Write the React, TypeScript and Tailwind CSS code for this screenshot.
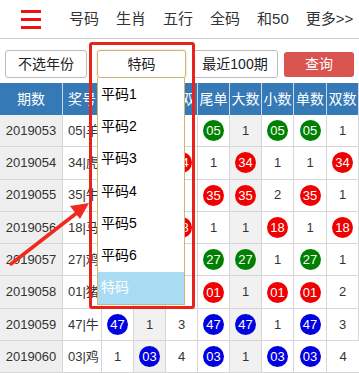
import React from "react";

type Cell = string | { b: string; c: "g" | "r" | "b" };

const rows: { id: string; zh: string; cells: Cell[] }[] = [
  { id: "2019053", zh: "05|羊", cells: ["", "", "1", { b: "05", c: "g" }, "1", { b: "05", c: "g" }, { b: "05", c: "g" }, "1"] },
  { id: "2019054", zh: "34|虎", cells: ["", "", { b: "34", c: "r" }, "1", { b: "34", c: "r" }, "1", "1", { b: "34", c: "r" }] },
  { id: "2019055", zh: "35|牛", cells: ["", "", "1", { b: "35", c: "r" }, { b: "35", c: "r" }, "2", { b: "35", c: "r" }, "1"] },
  { id: "2019056", zh: "18|马", cells: ["", "", { b: "18", c: "r" }, "1", "1", { b: "18", c: "r" }, "1", { b: "18", c: "r" }] },
  { id: "2019057", zh: "27|鸡", cells: ["", "", "2", { b: "27", c: "g" }, { b: "27", c: "g" }, "1", { b: "27", c: "g" }, "1"] },
  { id: "2019058", zh: "01|猪", cells: ["", "", "3", { b: "01", c: "r" }, "1", { b: "01", c: "r" }, { b: "01", c: "r" }, "2"] },
  { id: "2019059", zh: "47|牛", cells: [{ b: "47", c: "b" }, "1", "3", { b: "47", c: "b" }, { b: "47", c: "b" }, "1", { b: "47", c: "b" }, "3"] },
  { id: "2019060", zh: "03|鸡", cells: ["1", { b: "03", c: "b" }, "4", { b: "03", c: "b" }, "1", { b: "03", c: "b" }, { b: "03", c: "b" }, "4"] },
];

const heads = ["期数", "奖号", "", "", "单双", "尾单", "大数", "小数", "单数", "双数"];
const grayCols = [0, 3, 6];

const ballBg: Record<string, string> = {
  g: "bg-[#008000]",
  r: "bg-[#f00000]",
  b: "bg-[#0000e0]",
};

function Ball({ n, c }: { n: string; c: string }) {
  return (
    <span
      className={
        "flex items-center justify-center w-[21px] h-[21px] rounded-full text-white text-[13px] leading-none " +
        ballBg[c]
      }
    >
      {n}
    </span>
  );
}

export default function App() {
  const font = "font-['Liberation_Sans','Noto_Sans_CJK_SC',sans-serif]";
  return (
    <div className={"relative w-[359px] h-[373px] overflow-hidden bg-white text-[#333] " + font}>
      {/* header */}
      <div className="flex items-center h-[39px] border-b border-[#cfcfcf]">
        <div className="ml-[21px] flex flex-col gap-[5px] w-[20px]">
          <span className="h-[3px] bg-[#ee1111]" />
          <span className="h-[3px] bg-[#ee1111]" />
          <span className="h-[3px] bg-[#ee1111]" />
        </div>
        <nav className="ml-[28px] flex gap-[17px] text-[15px] text-[#333] pt-[1px]">
          <span>号码</span>
          <span>生肖</span>
          <span>五行</span>
          <span>全码</span>
          <span>和50</span>
          <span>更多&gt;&gt;</span>
        </nav>
      </div>

      {/* filters */}
      <div className="flex items-center mt-[11px] h-[28px] text-[14px]">
        <div className="ml-[5px] w-[82px] h-[28px] border border-[#bdbdbd] rounded-[3px] flex items-center justify-center text-[#222]">
          不选年份
        </div>
        <div className="ml-[10px] w-[89px] h-[28px] border border-[#d2b273] rounded-[3px] flex items-center justify-center text-[#222] shadow-[0_0_2px_rgba(200,160,90,0.6)]">
          特码
        </div>
        <div className="ml-[6px] w-[86px] h-[28px] border border-[#bdbdbd] rounded-[3px] flex items-center justify-center text-[#222]">
          最近100期
        </div>
        <div className="ml-[6px] w-[70px] h-[25px] rounded-[3px] bg-[#d9534f] flex items-center justify-center text-white">
          查询
        </div>
      </div>

      {/* table */}
      <div className="mt-[5px] grid grid-cols-[63px_39px_32px_32px_32px_32px_32px_32px_33px_32px]">
        {heads.map((h, i) => (
          <div
            key={i}
            className="h-[32px] bg-[#357ab7] text-white text-[14px] flex items-center justify-center border-r border-[#c9d9ea] last:border-r-0 overflow-hidden whitespace-nowrap"
          >
            {h}
          </div>
        ))}
        {rows.map((r) => (
          <React.Fragment key={r.id}>
            <div className="h-[32.3px] bg-[#efefef] border-r border-b border-[#d6d6d6] flex items-center justify-center text-[13px]">
              {r.id}
            </div>
            <div className="h-[32.3px] border-r border-b border-[#d6d6d6] flex items-center pl-[5px] text-[13px] overflow-hidden whitespace-nowrap">
              {r.zh}
            </div>
            {r.cells.map((c, j) => (
              <div
                key={j}
                className={
                  "h-[32.3px] border-r border-b border-[#d6d6d6] flex items-center justify-center text-[13px] last:border-r-0 " +
                  (grayCols.includes(j + 2) ? "bg-[#f1f1f1]" : "bg-white")
                }
              >
                {typeof c === "string" ? c : <Ball n={c.b} c={c.c} />}
              </div>
            ))}
          </React.Fragment>
        ))}
      </div>

      {/* dropdown list */}
      <div className="absolute left-[97px] top-[78px] w-[88px] border border-t-0 border-[#d2b273] bg-white text-[14px] text-black">
        {["平码1", "平码2", "平码3", "平码4", "平码5", "平码6"].map((t) => (
          <div key={t} className="h-[32.3px] flex items-center pl-[3px]">
            {t}
          </div>
        ))}
        <div className="h-[32.3px] flex items-center pl-[3px] bg-[#a9dcf2] text-white">特码</div>
      </div>

      {/* red annotation box */}
      <div className="absolute left-[89px] top-[42px] w-[106px] h-[267px] border-[3px] border-[#e8231c] rounded-[3px]" />

      {/* arrow */}
      <svg className="absolute left-0 top-0" width="359" height="373" viewBox="0 0 359 373">
        <line x1="11" y1="264" x2="78" y2="212" stroke="#f02a1e" strokeWidth="3.5" strokeLinecap="round" />
        <polygon points="89,203 70,206 80,219" fill="#f02a1e" />
      </svg>
    </div>
  );
}
